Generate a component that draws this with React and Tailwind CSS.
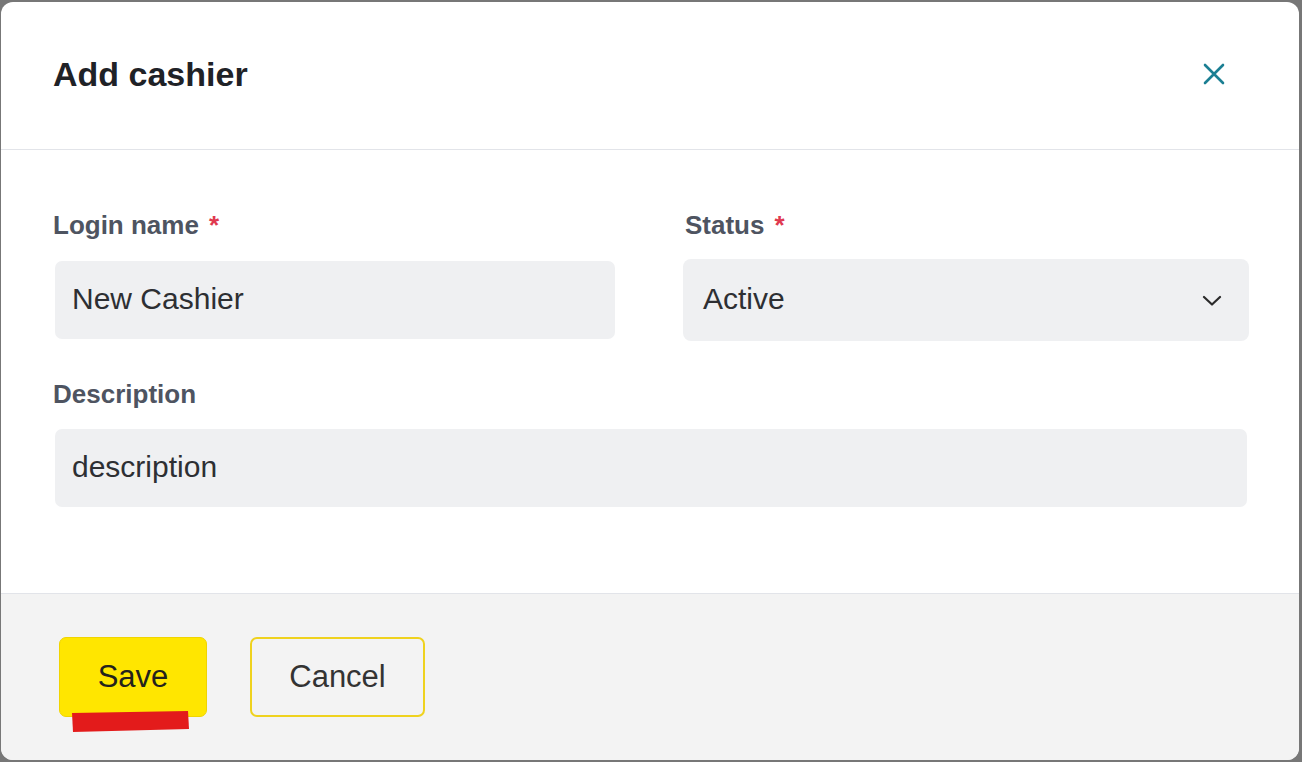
import React from 'react';

const font = { fontFamily: '"Liberation Sans", Arial, sans-serif' };

const Label = ({ children, required, className = '' }) => (
    <div className={`h-[30px] flex items-center text-[26px] leading-[30px] font-bold text-[#4e5461] ${className}`}>
        {children}
        {required && <span className="ml-[10px] text-[#e0394f]">*</span>}
    </div>
);

const App = () => {
    return (
        <div className="w-[1302px] h-[762px] bg-[#777777] pt-[2px] pl-[1px] pr-[3px] pb-[2px]" style={font}>
            <div className="h-full bg-white rounded-[12px] overflow-hidden flex flex-col">
                {/* header */}
                <div className="h-[148px] shrink-0 border-b border-[#e2e4e9] flex items-center justify-between pl-[52px] pr-[74px] pb-[3px]">
                    <h2 className="text-[34px] font-bold text-[#1f2227] leading-none">Add cashier</h2>
                    <button className="w-[22px] h-[22px] flex items-center justify-center">
                        <svg width="22" height="22" viewBox="0 0 22 22" fill="none" stroke="#1b7f93" strokeWidth="2.6" strokeLinecap="round">
                            <path d="M2 2 L20 20 M20 2 L2 20" />
                        </svg>
                    </button>
                </div>

                {/* body */}
                <div className="flex-1 pt-[60px] pl-[52px] pr-[50px]">
                    <div className="flex gap-[66px]">
                        <div className="w-[564px]">
                            <Label required>Login name</Label>
                            <div className="mt-[21px] mx-[2px] h-[78px] rounded-[7px] bg-[#eff0f2] flex items-center pl-[17px] pb-[3px] text-[30px] text-[#2d2f33]">
                                New Cashier
                            </div>
                        </div>
                        <div className="w-[566px]">
                            <Label required className="pl-[2px]">Status</Label>
                            <div className="mt-[19px] h-[82px] rounded-[8px] bg-[#eff0f2] flex items-center justify-between pl-[20px] pr-[27px] text-[30px] text-[#2d2f33]">
                                <span className="pb-[3px]">Active</span>
                                <svg width="20" height="11" viewBox="0 0 20 11" fill="none" stroke="#2b2b2b" strokeWidth="2.2" strokeLinecap="round" strokeLinejoin="round">
                                    <path d="M2 2 L10 9.5 L18 2" />
                                </svg>
                            </div>
                        </div>
                    </div>

                    <Label className="mt-[38px]">Description</Label>
                    <div className="mt-[20px] mx-[2px] h-[78px] rounded-[7px] bg-[#eff0f2] flex items-center pl-[17px] pb-[3px] text-[30px] text-[#2d2f33]">
                        description
                    </div>
                </div>

                {/* footer */}
                <div className="h-[167px] shrink-0 border-t border-[#e2e4e9] bg-[#f3f3f3] pt-[43px] pl-[58px] flex items-start gap-[43px]">
                    <div className="relative">
                        <button className="w-[148px] h-[80px] rounded-[7px] bg-[#ffe600] border border-[#f0d400] text-[31px] text-[#23221c]">
                            Save
                        </button>
                        <svg className="absolute left-0 top-0 pointer-events-none" width="148" height="100" viewBox="0 0 148 100">
                            <polygon points="13,76 129,74 130,92 14,95" fill="#e31b1b" />
                        </svg>
                    </div>
                    <button className="w-[175px] h-[80px] rounded-[7px] border-2 border-[#efd21e] text-[31px] text-[#333333]">
                        Cancel
                    </button>
                </div>
            </div>
        </div>
    );
};

export default App;
